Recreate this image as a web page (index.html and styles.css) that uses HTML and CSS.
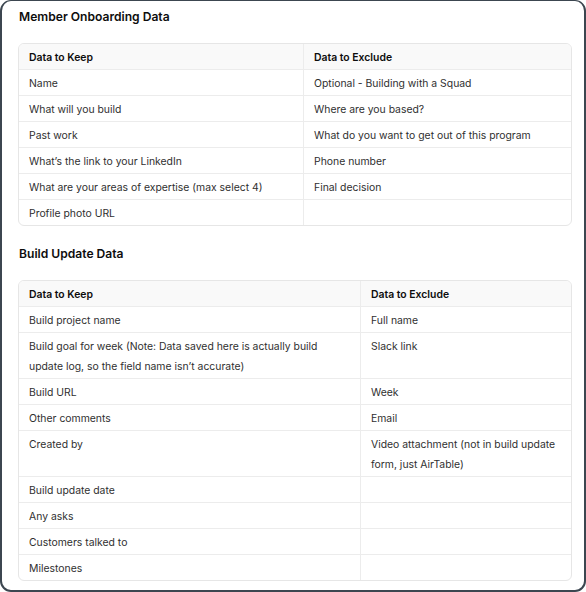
FILE: index.html
```html
<!DOCTYPE html>
<html>
<head>
<meta charset="utf-8">
<link rel="stylesheet" href="styles.css">
</head>
<body>
<div class="frame">
  <h2 class="title">Member Onboarding Data</h2>
  <div class="tbl-wrap">
    <table class="tbl t1">
      <thead><tr><th>Data to Keep</th><th>Data to Exclude</th></tr></thead>
      <tbody>
        <tr><td>Name</td><td>Optional - Building with a Squad</td></tr>
        <tr><td>What will you build</td><td>Where are you based?</td></tr>
        <tr><td>Past work</td><td>What do you want to get out of this program</td></tr>
        <tr><td>What’s the link to your LinkedIn</td><td>Phone number</td></tr>
        <tr><td>What are your areas of expertise (max select 4)</td><td>Final decision</td></tr>
        <tr><td>Profile photo URL</td><td></td></tr>
      </tbody>
    </table>
  </div>
  <h2 class="title second">Build Update Data</h2>
  <div class="tbl-wrap">
    <table class="tbl t2">
      <thead><tr><th>Data to Keep</th><th>Data to Exclude</th></tr></thead>
      <tbody>
        <tr><td>Build project name</td><td>Full name</td></tr>
        <tr><td>Build goal for week (Note: Data saved here is actually build update log, so the field name isn’t accurate)</td><td>Slack link</td></tr>
        <tr><td>Build URL</td><td>Week</td></tr>
        <tr><td>Other comments</td><td>Email</td></tr>
        <tr><td>Created by</td><td>Video attachment (not in build update form, just AirTable)</td></tr>
        <tr><td>Build update date</td><td></td></tr>
        <tr><td>Any asks</td><td></td></tr>
        <tr><td>Customers talked to</td><td></td></tr>
        <tr><td>Milestones</td><td></td></tr>
      </tbody>
    </table>
  </div>
</div>
</body>
</html>
```
FILE: styles.css
```css
html, body {
  margin: 0;
  padding: 0;
  background: #ffffff;
}
body {
  font-family: Inter, "Noto Sans", "Liberation Sans", sans-serif;
  color: #2a2a2a;
}
.frame {
  box-sizing: border-box;
  width: 586px;
  height: 592px;
  border-style: solid;
  border-color: #3c4650;
  border-width: 1px 2px 2px 2px;
  border-radius: 11px;
  padding: 6px 12px 0 16px;
}
.title {
  margin: 0;
  font-size: 12.1px;
  line-height: 20px;
  font-weight: 600;
  color: #0d0d0d;
  padding-left: 1px;
}
.title.second {
  margin-top: 18px;
}
.tbl-wrap {
  margin-top: 16px;
  border: 1px solid #e6e6e6;
  border-radius: 6px;
  overflow: hidden;
  width: 554px;
  box-sizing: border-box;
}
.tbl {
  width: 100%;
  border-collapse: collapse;
  table-layout: fixed;
  font-size: 10.4px;
  line-height: 20px;
}
.t1 th:first-child { width: 264px; }
.t2 th:first-child { width: 321px; }
.tbl th, .tbl td {
  text-align: left;
  vertical-align: top;
  padding: 4px 10px 1px 10px;
  border-bottom: 1px solid #ececec;
}
.tbl th + th, .tbl td + td {
  border-left: 1px solid #ececec;
}
.tbl tr:last-child td {
  border-bottom: none;
}
.tbl th {
  font-weight: 600;
  background: #f9f9f9;
  color: #0d0d0d;
}
.tbl td {
  color: #2f2f2f;
}
```
